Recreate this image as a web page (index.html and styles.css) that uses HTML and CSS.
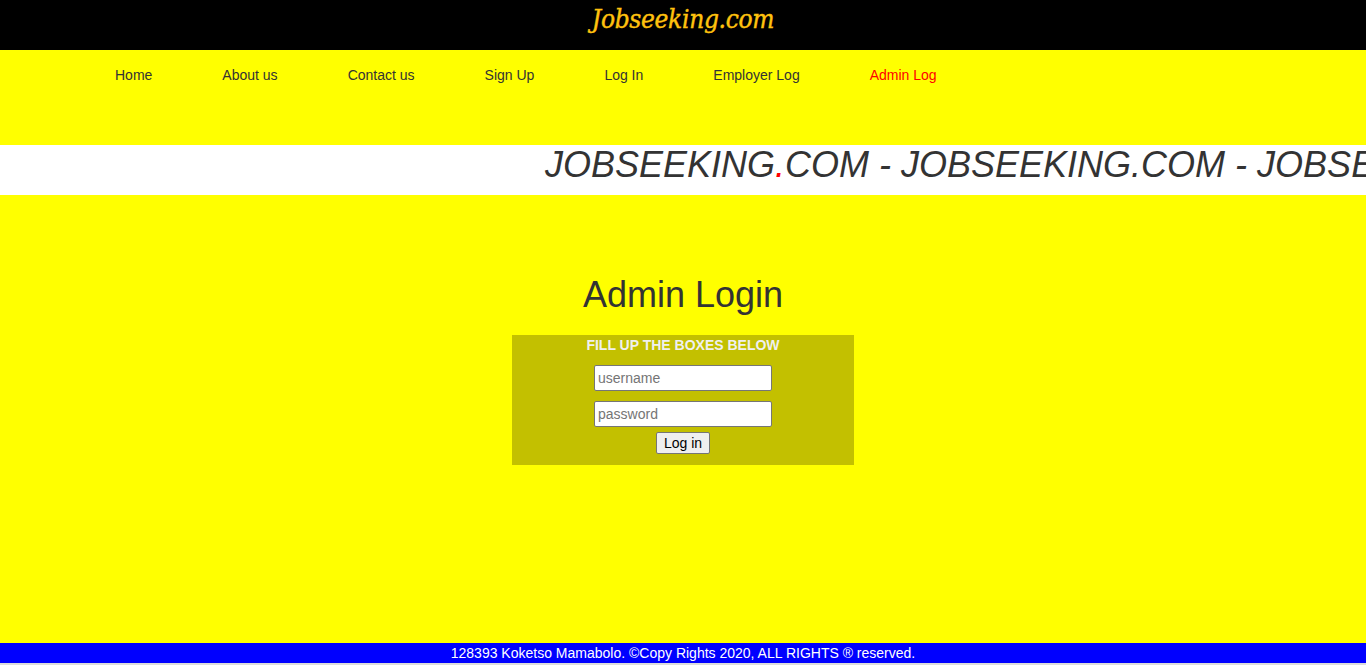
FILE: index.html
```html
<!DOCTYPE html>
<html lang="en">
<head>
<meta charset="utf-8">
<title>Admin Login - Jobseeking.com</title>
<link rel="stylesheet" href="styles.css">
</head>
<body>
<header class="top">
  <h1 class="brand">Jobseeking.com</h1>
</header>
<nav class="nav">
  <a href="#">Home</a>
  <a href="#">About us</a>
  <a href="#">Contact us</a>
  <a href="#">Sign Up</a>
  <a href="#">Log In</a>
  <a href="#">Employer Log</a>
  <a href="#" class="active">Admin Log</a>
</nav>
<div class="ticker">
  <span class="ticker-text">JOBSEEKING<span class="dot">.</span>COM - JOBSEEKING.COM - JOBSEEKING.COM - JOBSEEKING.COM</span>
</div>
<main class="main">
  <h2 class="title">Admin Login</h2>
  <form class="box">
    <div class="box-head">FILL UP THE BOXES BELOW</div>
    <input class="field" type="text" placeholder="username">
    <input class="field" type="password" placeholder="password">
    <button class="btn" type="button">Log in</button>
  </form>
</main>
<footer class="foot">128393 Koketso Mamabolo. ©Copy Rights 2020, ALL RIGHTS ® reserved.</footer>
</body>
</html>
```
FILE: styles.css
```css
html, body {
  margin: 0;
  padding: 0;
}
body {
  background: #dcdcdc;
  font-family: "Liberation Sans", Arial, sans-serif;
  overflow: hidden;
}
.top {
  background: #000;
  height: 50px;
  display: flex;
  justify-content: center;
}
.brand {
  margin: 0;
  padding-top: 2px;
  font-family: "DejaVu Serif", "Liberation Serif", serif;
  font-style: italic;
  font-weight: normal;
  font-stretch: condensed;
  font-size: 26px;
  line-height: 34px;
  color: #ffc20e;
  letter-spacing: -0.3px;
  -webkit-text-stroke: 0.4px #ffc20e;
}
.nav {
  background: #ff0;
  height: 95px;
  box-sizing: border-box;
  display: flex;
  gap: 70px;
  padding-left: 115px;
  padding-top: 17px;
}
.nav a {
  color: #333;
  text-decoration: none;
  font-size: 14px;
  line-height: 16px;
}
.nav a.active {
  color: #f00;
}
.ticker {
  background: #fff;
  height: 50px;
  overflow: hidden;
  white-space: nowrap;
  padding-left: 545px;
  box-sizing: border-box;
}
.ticker-text {
  display: block;
  font-style: italic;
  font-size: 36px;
  line-height: 40px;
  color: #333;
}
.dot {
  color: #f00;
}
.main {
  background: #ff0;
  height: 448px;
  display: flex;
  flex-direction: column;
  align-items: center;
  padding-top: 80px;
  box-sizing: border-box;
}
.title {
  margin: 0;
  font-weight: normal;
  font-size: 36px;
  line-height: 40px;
  color: #333;
}
.box {
  margin-top: 20px;
  width: 342px;
  height: 130px;
  background: #c3c000;
  display: flex;
  flex-direction: column;
  align-items: center;
  box-sizing: border-box;
  padding-top: 2px;
}
.box-head {
  color: #f0f0f0;
  font-weight: bold;
  font-size: 14px;
  line-height: 16px;
  margin-bottom: 12px;
}
.field {
  width: 178px;
  height: 26px;
  box-sizing: border-box;
  border: 1px solid #767676;
  border-radius: 2px;
  padding: 1px 3px;
  font-family: "Liberation Sans", Arial, sans-serif;
  font-size: 14px;
  background: #fff;
  margin-bottom: 10px;
}
.field + .field {
  margin-bottom: 5px;
}
.field::placeholder {
  color: #757575;
}
.btn {
  width: 54px;
  height: 22px;
  box-sizing: border-box;
  font-family: "Liberation Sans", Arial, sans-serif;
  font-size: 14px;
  color: #000;
  background: #efefef;
  border: 1px solid #767676;
  border-radius: 2px;
  padding: 0;
}
.foot {
  background: #00f;
  color: #fff;
  height: 20px;
  text-align: center;
  font-size: 14px;
  line-height: 20px;
}
```
